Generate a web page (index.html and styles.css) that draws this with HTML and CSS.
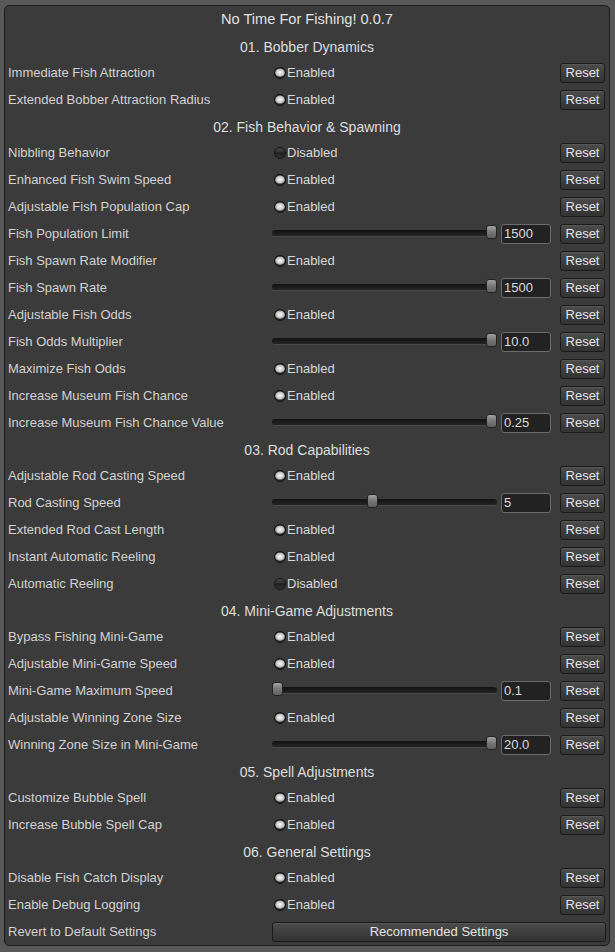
FILE: index.html
```html
<!DOCTYPE html>
<html>
<head>
<meta charset="utf-8">
<link rel="stylesheet" href="styles.css">
</head>
<body>
<div class="panel">
  <div class="title">No Time For Fishing! 0.0.7</div>

  <div class="header">01. Bobber Dynamics</div>
  <div class="row"><span class="label">Immediate Fish Attraction</span><span class="toggle on">Enabled</span><button class="btn">Reset</button></div>
  <div class="row"><span class="label">Extended Bobber Attraction Radius</span><span class="toggle on">Enabled</span><button class="btn">Reset</button></div>

  <div class="header">02. Fish Behavior &amp; Spawning</div>
  <div class="row"><span class="label">Nibbling Behavior</span><span class="toggle off">Disabled</span><button class="btn">Reset</button></div>
  <div class="row"><span class="label">Enhanced Fish Swim Speed</span><span class="toggle on">Enabled</span><button class="btn">Reset</button></div>
  <div class="row"><span class="label">Adjustable Fish Population Cap</span><span class="toggle on">Enabled</span><button class="btn">Reset</button></div>
  <div class="row"><span class="label">Fish Population Limit</span><span class="slider"><span class="track"><span class="thumb" style="left:calc((100% - 11px) * 1)"></span></span><span class="field">1500</span></span><button class="btn">Reset</button></div>
  <div class="row"><span class="label">Fish Spawn Rate Modifier</span><span class="toggle on">Enabled</span><button class="btn">Reset</button></div>
  <div class="row"><span class="label">Fish Spawn Rate</span><span class="slider"><span class="track"><span class="thumb" style="left:calc((100% - 11px) * 1)"></span></span><span class="field">1500</span></span><button class="btn">Reset</button></div>
  <div class="row"><span class="label">Adjustable Fish Odds</span><span class="toggle on">Enabled</span><button class="btn">Reset</button></div>
  <div class="row"><span class="label">Fish Odds Multiplier</span><span class="slider"><span class="track"><span class="thumb" style="left:calc((100% - 11px) * 1)"></span></span><span class="field">10.0</span></span><button class="btn">Reset</button></div>
  <div class="row"><span class="label">Maximize Fish Odds</span><span class="toggle on">Enabled</span><button class="btn">Reset</button></div>
  <div class="row"><span class="label">Increase Museum Fish Chance</span><span class="toggle on">Enabled</span><button class="btn">Reset</button></div>
  <div class="row"><span class="label">Increase Museum Fish Chance Value</span><span class="slider"><span class="track"><span class="thumb" style="left:calc((100% - 11px) * 1)"></span></span><span class="field">0.25</span></span><button class="btn">Reset</button></div>

  <div class="header">03. Rod Capabilities</div>
  <div class="row"><span class="label">Adjustable Rod Casting Speed</span><span class="toggle on">Enabled</span><button class="btn">Reset</button></div>
  <div class="row"><span class="label">Rod Casting Speed</span><span class="slider"><span class="track"><span class="thumb" style="left:calc((100% - 11px) * 0.4444)"></span></span><span class="field">5</span></span><button class="btn">Reset</button></div>
  <div class="row"><span class="label">Extended Rod Cast Length</span><span class="toggle on">Enabled</span><button class="btn">Reset</button></div>
  <div class="row"><span class="label">Instant Automatic Reeling</span><span class="toggle on">Enabled</span><button class="btn">Reset</button></div>
  <div class="row"><span class="label">Automatic Reeling</span><span class="toggle off">Disabled</span><button class="btn">Reset</button></div>

  <div class="header">04. Mini-Game Adjustments</div>
  <div class="row"><span class="label">Bypass Fishing Mini-Game</span><span class="toggle on">Enabled</span><button class="btn">Reset</button></div>
  <div class="row"><span class="label">Adjustable Mini-Game Speed</span><span class="toggle on">Enabled</span><button class="btn">Reset</button></div>
  <div class="row"><span class="label">Mini-Game Maximum Speed</span><span class="slider"><span class="track"><span class="thumb" style="left:calc((100% - 11px) * 0)"></span></span><span class="field">0.1</span></span><button class="btn">Reset</button></div>
  <div class="row"><span class="label">Adjustable Winning Zone Size</span><span class="toggle on">Enabled</span><button class="btn">Reset</button></div>
  <div class="row"><span class="label">Winning Zone Size in Mini-Game</span><span class="slider"><span class="track"><span class="thumb" style="left:calc((100% - 11px) * 1)"></span></span><span class="field">20.0</span></span><button class="btn">Reset</button></div>

  <div class="header">05. Spell Adjustments</div>
  <div class="row"><span class="label">Customize Bubble Spell</span><span class="toggle on">Enabled</span><button class="btn">Reset</button></div>
  <div class="row"><span class="label">Increase Bubble Spell Cap</span><span class="toggle on">Enabled</span><button class="btn">Reset</button></div>

  <div class="header">06. General Settings</div>
  <div class="row"><span class="label">Disable Fish Catch Display</span><span class="toggle on">Enabled</span><button class="btn">Reset</button></div>
  <div class="row"><span class="label">Enable Debug Logging</span><span class="toggle on">Enabled</span><button class="btn">Reset</button></div>
  <div class="row"><span class="label">Revert to Default Settings</span><button class="btn wide">Recommended Settings</button></div>
</div>
</body>
</html>
```

FILE: styles.css
```css
html, body {
  margin: 0;
  padding: 0;
  background: #585858;
}
body {
  font-family: "Liberation Sans", Arial, sans-serif;
  font-size: 13px;
  color: #d4d4d4;
  width: 615px;
  height: 952px;
  overflow: hidden;
}
.panel {
  margin: 5px 0 0 4px;
  width: 604px;
  height: 939px;
  background: #3b3b3b;
  border: 1px solid #1d1d1d;
  border-radius: 5px;
}
.title {
  height: 27px;
  line-height: 27px;
  text-align: center;
  font-size: 14.6px;
  color: #e2e2e2;
}
.header {
  height: 26px;
  line-height: 28px;
  text-align: center;
  font-size: 14px;
  color: #dedede;
}
.row {
  height: 27px;
  display: grid;
  grid-template-columns: 264px 1fr 54px;
  align-items: center;
  padding: 0 4px 0 3px;
}
.label {
  white-space: nowrap;
  color: #d2d2d2;
}
.toggle {
  display: flex;
  align-items: center;
  color: #d8d8d8;
}
.toggle::before {
  content: "";
  width: 12px;
  height: 12px;
  margin: 0 1px 0 2px;
  border-radius: 50%;
  box-sizing: border-box;
  border: 1px solid #141414;
}
.toggle.on::before {
  background: radial-gradient(ellipse 5.5px 4.5px at 50% 46%, #f4f4f4 0%, #d6d6d6 55%, #a8a8a8 80%, #2c2c2c 100%);
  background-color: #2c2c2c;
}
.toggle.off::before {
  background: linear-gradient(#444 0, #333 42%, #161616 50%, #262626 58%, #333 100%);
}
.slider {
  display: flex;
  align-items: center;
  gap: 4px;
}
.track {
  position: relative;
  flex: 1;
  height: 6px;
  background: linear-gradient(#121212, #242424);
  border-radius: 3px;
  border-bottom: 1px solid #4a4a4a;
}
.thumb {
  position: absolute;
  top: -5px;
  width: 11px;
  height: 14px;
  border-radius: 3px;
  border: 1px solid #222;
  box-sizing: border-box;
  background: linear-gradient(#a0a0a0, #747474 55%, #606060);
}
.field {
  width: 50px;
  height: 20px;
  box-sizing: border-box;
  border: 1px solid #6c6c6c;
  border-radius: 3px;
  background: #222222;
  color: #dcdcdc;
  line-height: 18px;
  padding-left: 2px;
}
.btn {
  justify-self: end;
  height: 20px;
  width: 45px;
  padding: 0;
  box-sizing: border-box;
  border: 1px solid #1a1a1a;
  border-radius: 3px;
  background: linear-gradient(#4c4c4c, #3c3c3c 60%, #333333);
  box-shadow: inset 0 1px 0 #575757;
  color: #e4e4e4;
  font-family: "Liberation Sans", Arial, sans-serif;
  font-size: 13px;
  line-height: 18px;
  text-align: center;
}
.btn.wide {
  grid-column: 2 / 4;
  justify-self: stretch;
  width: auto;
  margin-right: -1px;
}
```
